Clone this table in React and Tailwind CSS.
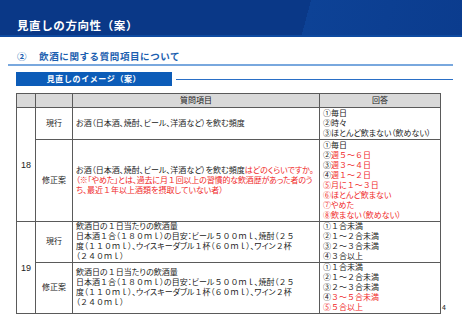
import React from "react";

const Red = ({ children }) => <span className="text-[#f02828]">{children}</span>;

// proportional kana/punctuation, but keep full-width digits wide
const T = ({ t }) =>
  t.split(/([０-９ｍｌ～①-⑧]+)/).map((s, i) =>
    i % 2 ? (
      <span key={i} className="[font-feature-settings:normal]">
        {s}
      </span>
    ) : (
      s
    )
  );

const cell = "border border-[#5a5a5a] px-[3px] align-middle";

const Sake19 = () => (
  <>
    <T t="飲酒日の１日当たりの飲酒量" />
    <br />
    <T t="日本酒１合（１８０ｍｌ）の目安：ビール５００ｍｌ、焼酎（２５" />
    <br />
    <T t="度（１１０ｍｌ）、ウイスキーダブル１杯（６０ｍｌ）、ワイン２杯" />
    <br />
    <T t="（２４０ｍｌ）" />
  </>
);

const App = () => {
  return (
    <div className="w-[462px] h-[320px] overflow-hidden bg-white font-['Noto_Sans_CJK_JP',sans-serif] text-[#222]">
      {/* header */}
      <div className="h-[37px] bg-[linear-gradient(105deg,#0a3887_0%,#0a3887_66%,#0d4296_66%,#0b3c8e_100%)] border-b-[2px] border-[#0e4aa0] pl-[17px] pt-[19px]">
        <h1 className="text-white text-[11.5px] font-bold leading-[13px] tracking-[0.6px]">見直しの方向性（案）</h1>
      </div>

      <div className="mt-[13px] pl-[17px] text-[#1c5fb0] text-[9.5px] font-bold leading-[12px] tracking-[0.6px]">
        ②<span className="ml-[12px]">飲酒に関する質問項目について</span>
      </div>
      <div className="mt-[2px] ml-[8px] w-[445px] h-[2px] bg-[#79a8de]" />

      <div className="mt-[6px] flex items-center pl-[16px] pr-[9px]">
        <div className="w-[156px] h-[14px] bg-[#0c5cb8] flex items-center justify-center text-white text-[8px] font-bold tracking-[0.6px] leading-none">
          見直しのイメージ（案）
        </div>
        <div className="flex-1 ml-[4px] h-px bg-[#2a6fc6]" />
      </div>

      <div className="mt-[7px] pl-[16px] flex items-end">
        <table className="table-fixed border-collapse w-[424px] font-['Liberation_Sans','Noto_Sans_CJK_JP',sans-serif] text-[8px] leading-[10px] [font-feature-settings:'palt']">
          <colgroup>
            <col className="w-[19px]" />
            <col className="w-[37px]" />
            <col className="w-[247px]" />
            <col className="w-[121px]" />
          </colgroup>
          <tbody>
            <tr className="h-[14px] bg-[#d9d9d9] text-center">
              <td className={cell}></td>
              <td className={cell}></td>
              <td className={cell}>質問項目</td>
              <td className={cell}>回答</td>
            </tr>
            <tr className="h-[32px]">
              <td className={cell + " text-center text-[9px]"} rowSpan={2}>18</td>
              <td className={cell + " text-center"}>現行</td>
              <td className={cell + " whitespace-nowrap"}>お酒（日本酒、焼酎、ビール、洋酒など）を飲む頻度</td>
              <td className={cell + " whitespace-nowrap"}>
                <T t="①毎日" />
                <br />
                <T t="②時々" />
                <br />
                <T t="③ほとんど飲まない（飲めない）" />
              </td>
            </tr>
            <tr className="h-[82px]">
              <td className={cell + " text-center"}>修正案</td>
              <td className={cell + " whitespace-nowrap"}>
                お酒（日本酒、焼酎、ビール、洋酒など）を飲む頻度<Red>はどのくらいですか。</Red>
                <br />
                <span className="tracking-[-0.15px]">
                  <Red>
                    <T t="（※「やめた」とは、過去に月１回以上の習慣的な飲酒歴があった者のう" />
                  </Red>
                </span>
                <br />
                <Red>
                  <T t="ち、最近１年以上酒類を摂取していない者）" />
                </Red>
              </td>
              <td className={cell + " whitespace-nowrap"}>
                <T t="①毎日" />
                <br />
                <T t="②" />
                <Red>
                  <T t="週５～６日" />
                </Red>
                <br />
                <T t="③" />
                <Red>
                  <T t="週３～４日" />
                </Red>
                <br />
                <T t="④" />
                <Red>
                  <T t="週１～２日" />
                </Red>
                <br />
                <Red>
                  <T t="⑤月に１～３日" />
                </Red>
                <br />
                <Red>
                  <T t="⑥ほとんど飲まない" />
                </Red>
                <br />
                <Red>
                  <T t="⑦やめた" />
                </Red>
                <br />
                <Red>
                  <T t="⑧飲まない（飲めない）" />
                </Red>
              </td>
            </tr>
            <tr className="h-[41px]">
              <td className={cell + " text-center text-[9px]"} rowSpan={2}>19</td>
              <td className={cell + " text-center"}>現行</td>
              <td className={cell + " whitespace-nowrap"}>
                <Sake19 />
              </td>
              <td className={cell + " whitespace-nowrap"}>
                <T t="①１合未満" />
                <br />
                <T t="②１～２合未満" />
                <br />
                <T t="③２～３合未満" />
                <br />
                <T t="④３合以上" />
              </td>
            </tr>
            <tr className="h-[51px]">
              <td className={cell + " text-center"}>修正案</td>
              <td className={cell + " whitespace-nowrap"}>
                <Sake19 />
              </td>
              <td className={cell + " whitespace-nowrap"}>
                <T t="①１合未満" />
                <br />
                <T t="②１～２合未満" />
                <br />
                <T t="③２～３合未満" />
                <br />
                <T t="④" />
                <Red>
                  <T t="３～５合未満" />
                </Red>
                <br />
                <Red>
                  <T t="⑤５合以上" />
                </Red>
              </td>
            </tr>
          </tbody>
        </table>
        <div className="ml-[1px] mb-[3px] text-[7px] leading-none">4</div>
      </div>
    </div>
  );
};

export default App;
